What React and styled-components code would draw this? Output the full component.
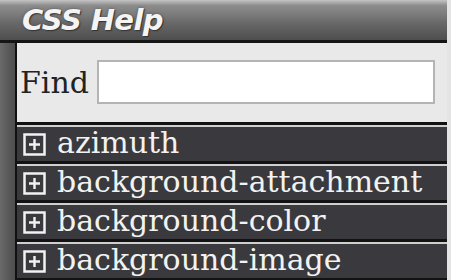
import styled, { createGlobalStyle } from "styled-components";

const GlobalStyle = createGlobalStyle`
  html, body {
    margin: 0;
    padding: 0;
    background: #e4e4e4;
    overflow: hidden;
  }
`;

const properties = [
  "azimuth",
  "background-attachment",
  "background-color",
  "background-image",
];

function PlusBox() {
  return (
    <PlusSvg viewBox="0 0 23 23">
      <rect x="1.5" y="1.5" width="20" height="20" fill="none" stroke="#f2f2f2" strokeWidth="2.5" />
      <path d="M11.5 6v11M6 11.5h11" stroke="#f2f2f2" strokeWidth="2.4" />
    </PlusSvg>
  );
}

export default function App() {
  return (
    <>
      <GlobalStyle />
      <Frame>
        <TitleBar>
          <Title>CSS Help</Title>
        </TitleBar>
        <Body>
          <Rail />
          <Content>
            <FindPanel>
              <FindLabel>Find</FindLabel>
              <FindInput type="text" />
            </FindPanel>
            <List>
              {properties.map((name) => (
                <Row key={name}>
                  <PlusBox />
                  <RowText>{name}</RowText>
                </Row>
              ))}
            </List>
          </Content>
        </Body>
      </Frame>
    </>
  );
}

const Frame = styled.div`
  width: 447px;
  height: 280px;
  display: flex;
  flex-direction: column;
  overflow: hidden;
  background: #3a3a3e;
`;

const TitleBar = styled.div`
  height: 40px;
  flex-shrink: 0;
  display: flex;
  align-items: center;
  padding-left: 22px;
  border-bottom: 3px solid #151515;
  background: linear-gradient(
    to bottom,
    #c4c4c4 0%,
    #8c8c8c 14%,
    #7a7a7a 38%,
    #6a6a6a 55%,
    #5a5a5a 80%,
    #4e4e4e 100%
  );
`;

const Title = styled.h1`
  margin: 0;
  font-family: "DejaVu Sans", sans-serif;
  font-size: 29px;
  font-weight: bold;
  font-style: italic;
  color: #f4f4f4;
  letter-spacing: -0.6px;
  text-shadow: 1px 1px 1px #333, 0 0 3px #555;
`;

const Body = styled.div`
  flex: 1;
  display: flex;
  min-height: 0;
`;

const Rail = styled.div`
  width: 15px;
  flex-shrink: 0;
  border-right: 2px solid #111;
  background: linear-gradient(to right, #6a6a6a, #585858 60%, #4e4e4e);
`;

const Content = styled.div`
  flex: 1;
  display: flex;
  flex-direction: column;
  min-width: 0;
`;

const FindPanel = styled.div`
  height: 79px;
  flex-shrink: 0;
  display: flex;
  align-items: center;
  gap: 8px;
  padding: 0 12px 0 3px;
  background: #e9e9ea;
  border-bottom: 3px solid #111;
`;

const FindLabel = styled.label`
  font-family: "DejaVu Serif", serif;
  font-size: 30px;
  color: #1e2326;
`;

const FindInput = styled.input`
  flex: 1;
  height: 44px;
  box-sizing: border-box;
  border: 2px solid #b4b4b4;
  background: #fff;
  outline: none;
  margin-top: -2px;
`;

const List = styled.div`
  display: flex;
  flex-direction: column;
`;

const Row = styled.div`
  height: 39px;
  box-sizing: border-box;
  flex-shrink: 0;
  display: flex;
  align-items: center;
  gap: 11px;
  padding-left: 6px;
  border-top: 2px solid #cfcfcf;
  border-bottom: 3px solid #121212;
  background: #3a3a3e;
`;

const PlusSvg = styled.svg`
  width: 23px;
  height: 23px;
  flex-shrink: 0;
`;

const RowText = styled.span`
  font-family: "DejaVu Serif", serif;
  font-size: 30px;
  color: #f2f2f2;
  white-space: nowrap;
  line-height: 1;
  margin-top: -2px;
`;
